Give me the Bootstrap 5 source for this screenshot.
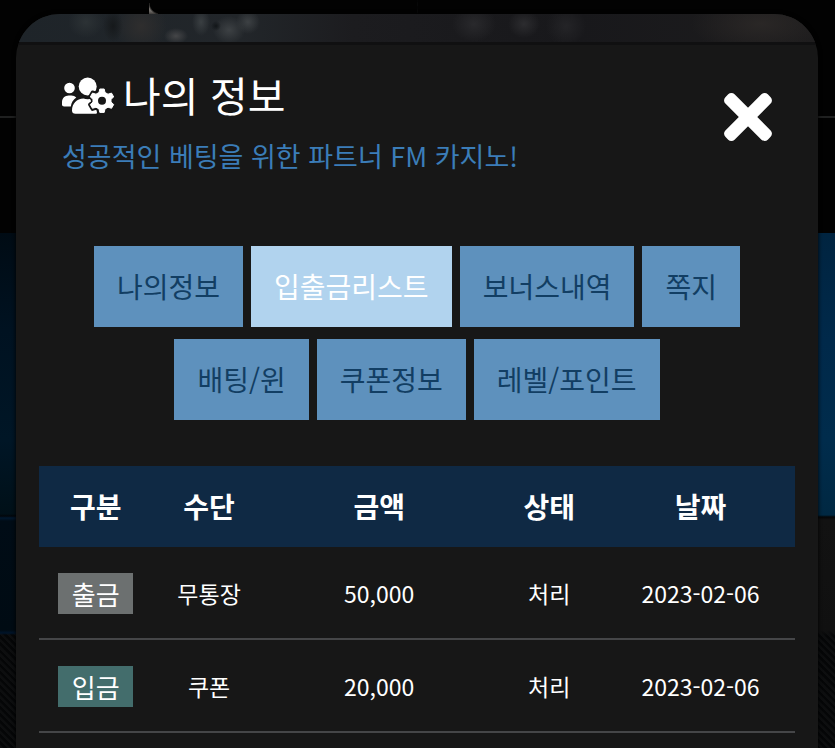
<!DOCTYPE html>
<html lang="ko">
<head>
<meta charset="utf-8">
<meta name="viewport" content="width=device-width, initial-scale=1">
<title>나의 정보</title>
<link href="https://cdn.jsdelivr.net/npm/bootstrap@5.3.0/dist/css/bootstrap.min.css" rel="stylesheet">
<style>
  body {
    font-family: "Noto Sans CJK KR", sans-serif;
    color: #fff;
    background-color: #020202;
  }
  .backdrop-scene {
    padding: 14px 17px 0 16px;
    background:
      radial-gradient(circle at 11px 0, transparent 10px, #77736f 12px) 149px 3px / 9px 11px no-repeat,
      linear-gradient(to bottom, transparent 116px, #1f2020 116px, #1f2020 118px, transparent 118px),
      linear-gradient(to bottom, #020202 233px, #000b14 233px, #001221 330px, #001626 440px, #001018 514px, #02060a 516px, #00182f 518px, #000c16 521px, #000b13 630px, #00142a 633px, transparent 635px) left / 50% 100% no-repeat,
      linear-gradient(to bottom, #020202 233px, #002440 233px, #00294a 340px, #002c4c 440px, #002842 515px, #050607 517px, #121212 520px, #101010 630px, transparent 636px) right / 50% 100% no-repeat,
      repeating-linear-gradient(45deg, #0d0e0f 0, #0d0e0f 2px, #050607 3px, #050607 5px);
  }
  .info-panel {
    background: #171717;
    border-radius: 44px 44px 0 0;
    overflow: hidden;
    box-shadow: 0 0 4px #000;
  }
  .stone-strip {
    height: 31px;
    border-bottom: 3px solid #101011;
    background:
      radial-gradient(ellipse 12px 8px at 160px 22px, #454648, transparent),
      radial-gradient(ellipse 9px 14px at 185px 8px, #3a3f42, transparent),
      radial-gradient(ellipse 5px 5px at 200px 12px, #111518, transparent),
      radial-gradient(ellipse 16px 14px at 213px 16px, #3d4144, transparent),
      radial-gradient(ellipse 12px 12px at 232px 8px, #3d4144, transparent),
      radial-gradient(ellipse 18px 16px at 70px 8px, #2c3235, transparent),
      radial-gradient(ellipse 10px 16px at 97px 12px, #16191b, transparent),
      radial-gradient(ellipse 26px 26px at 125px 12px, #2f2e2e, transparent),
      radial-gradient(ellipse 22px 18px at 458px 10px, #29292c, transparent),
      radial-gradient(ellipse 16px 14px at 508px 10px, #2c2c2f, transparent),
      radial-gradient(ellipse 20px 20px at 550px 12px, #242427, transparent),
      radial-gradient(ellipse 70px 30px at 745px 10px, #2a2726, transparent),
      linear-gradient(to right, #1e2429, #22262a 28%, #1c1c1f 42%, #18181b 70%, #1d1c1d);
  }
  .panel-top { padding: 19px 45px 0 46px; }
  .panel-title { font-size: 41px; line-height: 60px; font-weight: 400; }
  .panel-title svg { width: 53px; height: 40px; }
  .panel-sub { font-size: 27px; line-height: 40px; color: #3b7db8; margin-top: 12px; }
  .close-x { margin-top: 28px; line-height: 0; }
  .close-x svg { width: 50px; height: 50px; }
  .tab-list { column-gap: 8px; row-gap: 12px; padding: 70px 60px 46px; }
  .tab-btn {
    font-size: 28px;
    line-height: 41px;
    padding: 20px 23px;
    border: 0;
    border-radius: 0;
    color: #123e63;
    background: #5e91bd;
  }
  .tab-btn:hover { color: #fff; background: #7eabd2; }
  .tab-btn.active { color: #fff; background: #b1d3ee; }
  .table-wrap { padding: 0 23px; }
  .history { table-layout: fixed; font-size: 23px; line-height: 41px; color: #fff; }
  .history th { background: #0f2944; color: #fff; font-size: 28px; font-weight: 700; padding: 20px 0; }
  .history td { background: transparent; color: #fff; padding: 26px 0 24px; border-bottom: 2px solid #454648; }
  .history thead tr, .history th { border: 0; }
  .col-narrow { width: 15%; }
  .col-amount { width: 30%; }
  .kind { display: block; width: 75px; margin: 0 auto; font-size: 26px; line-height: 41px; }
  .kind-out { background: #6c7070; }
  .kind-in { background: #436d6c; }
</style>
<script src="https://cdn.jsdelivr.net/npm/bootstrap@5.3.0/dist/js/bootstrap.bundle.min.js"></script>
</head>
<body>
<div class="backdrop-scene min-vh-100 d-flex">
  <main class="info-panel flex-grow-1">
    <div class="stone-strip"></div>
    <header class="panel-top d-flex justify-content-between align-items-start">
      <div>
        <h1 class="panel-title d-flex align-items-center gap-2 mb-0">
          <svg viewBox="0 0 53 40" fill="#fff" aria-hidden="true">
            <circle cx="7.500" cy="14" r="5.300"/>
            <circle cx="25.700" cy="12.500" r="9"/>
            <path d="M0 30.500V28c0-3.700 3-6.500 6.700-6.500h2.600c2 0 3.700.7 5 2-3 2-5 5-5.500 9H2.200C.8 32.500 0 31.700 0 30.500z"/>
            <path d="M10 36.500c0-7 4.800-12 11.500-12 2.500 1 6 1 8.500 0h3l2 14.500-.8.800H13.500C11.300 39.800 10 38.600 10 36.500z"/>
            <g transform="translate(40 26.700)">
              <path stroke="#171717" stroke-width="3.600" stroke-linejoin="round" d="M-2.600-12.200h5.200l.8 3.500 2.500 1.400 3.600-1.100 2.600 4.500-2.700 2.500v2.800l2.700 2.500-2.600 4.500-3.600-1.100-2.500 1.400-.8 3.500h-5.200l-.8-3.500-2.500-1.400-3.600 1.100-2.600-4.500 2.700-2.500v-2.800l-2.700-2.500 2.600-4.500 3.600 1.100 2.500-1.400z"/>
              <path stroke="#fff" stroke-width="1" stroke-linejoin="round" d="M-2.200-11.700h4.400l.8 3.500 3 1.700 3.500-1.100 2.200 3.800-2.700 2.400v2.800l2.700 2.400-2.200 3.800-3.500-1.100-3 1.700-.8 3.500h-4.400l-.8-3.500-3-1.700-3.500 1.100-2.200-3.800 2.700-2.400v-2.800l-2.700-2.400 2.200-3.800 3.500 1.100 3-1.700z"/>
              <circle r="4" fill="#171717"/>
            </g>
          </svg>
          <span>나의 정보</span>
        </h1>
        <p class="panel-sub mb-0">성공적인 베팅을 위한 파트너 FM 카지노!</p>
      </div>
      <button type="button" class="close-x btn p-0 border-0" aria-label="닫기">
        <svg viewBox="0 0 50 50" fill="#fff" aria-hidden="true">
          <g transform="translate(25 25) rotate(45)">
            <rect x="-30" y="-6.500" width="60" height="13" rx="4.500"/>
            <rect x="-6.500" y="-30" width="13" height="60" rx="4.500"/>
          </g>
        </svg>
      </button>
    </header>

    <nav class="tab-list d-flex flex-wrap justify-content-center" aria-label="나의 정보 메뉴">
      <button type="button" class="btn tab-btn">나의정보</button>
      <button type="button" class="btn tab-btn active" aria-current="page">입출금리스트</button>
      <button type="button" class="btn tab-btn">보너스내역</button>
      <button type="button" class="btn tab-btn">쪽지</button>
      <button type="button" class="btn tab-btn">배팅/윈</button>
      <button type="button" class="btn tab-btn">쿠폰정보</button>
      <button type="button" class="btn tab-btn">레벨/포인트</button>
    </nav>

    <div class="table-wrap">
      <table class="history table align-middle text-center mb-0">
        <thead>
          <tr>
            <th scope="col" class="col-narrow">구분</th>
            <th scope="col" class="col-narrow">수단</th>
            <th scope="col" class="col-amount">금액</th>
            <th scope="col" class="col-narrow">상태</th>
            <th scope="col" class="w-25">날짜</th>
          </tr>
        </thead>
        <tbody>
          <tr>
            <td><span class="kind kind-out">출금</span></td>
            <td>무통장</td>
            <td>50,000</td>
            <td>처리</td>
            <td>2023-02-06</td>
          </tr>
          <tr>
            <td><span class="kind kind-in">입금</span></td>
            <td>쿠폰</td>
            <td>20,000</td>
            <td>처리</td>
            <td>2023-02-06</td>
          </tr>
        </tbody>
      </table>
    </div>
  </main>
</div>
</body>
</html>
